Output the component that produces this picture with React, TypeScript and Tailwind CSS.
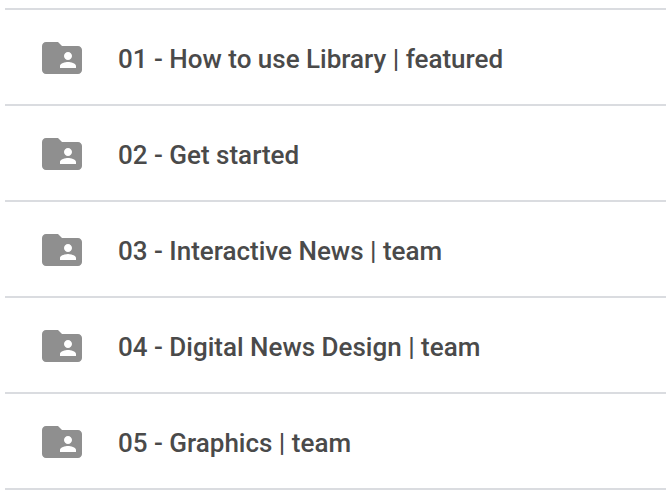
import React from 'react';

const folders = [
    '01 - How to use Library | featured',
    '02 - Get started',
    '03 - Interactive News | team',
    '04 - Digital News Design | team',
    '05 - Graphics | team',
];

const SharedFolderIcon = () => {
    return (
        <svg className="size-12 shrink-0" viewBox="0 0 24 24" fill="#8f8f8f">
            <path d="M20 6h-8l-2-2H4c-1.1 0-1.99.9-1.99 2L2 18c0 1.1.9 2 2 2h16c1.1 0 2-.9 2-2V8c0-1.1-.9-2-2-2zm-5 3c1.1 0 2 .9 2 2s-.9 2-2 2-2-.9-2-2 .9-2 2-2zm4 8h-8v-1c0-1.33 2.67-2 4-2s4 .67 4 2v1z"/>
        </svg>
    );
};

const App = () => {
    return (
        <div className="h-screen overflow-hidden bg-white pl-[5px] pt-2 font-[Roboto,sans-serif]">
            <ul className="border-t-2 border-[#dadce0]">
                {folders.map((name) => (
                    <li key={name} className="flex h-24 items-center border-b-2 border-[#dadce0] pl-[33px] pt-0.5">
                        <SharedFolderIcon/>
                        <span className="ml-8 whitespace-nowrap pt-0.5 text-[26px] font-medium text-[#4a4a4a] antialiased">{name}</span>
                    </li>
                ))}
            </ul>
        </div>
    );
};

export default App;
